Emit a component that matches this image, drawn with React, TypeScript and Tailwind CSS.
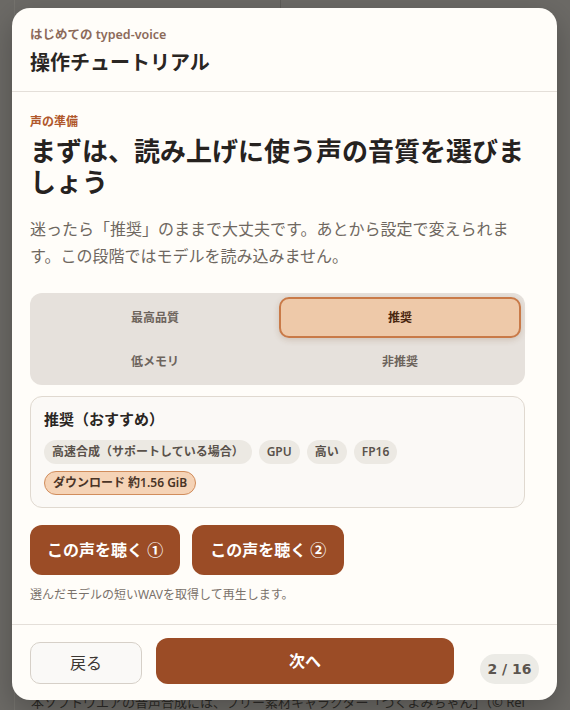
import React from 'react';

const tiers = [
  { label: '最高品質', active: false },
  { label: '推奨', active: true },
  { label: '低メモリ', active: false },
  { label: '非推奨', active: false },
];

const chips = ['高速合成（サポートしている場合）', 'GPU', '高い', 'FP16'];

export default function App() {
  return (
    <div className="relative h-[710px] w-full overflow-hidden bg-[#6c6a66] font-[family-name:'Noto_Sans','Noto_Sans_CJK_JP',sans-serif]">
      {/* 背面のページ */}
      <div className="flex h-full">
        <div className="ml-[14px] mr-[16px] flex flex-1 flex-col border-l border-[#75736e]">
          <div className="h-[692px] shrink-0">
            <div className="ml-[265px] h-[10px] border-l border-[#5e5c58]" />
          </div>
          <p className="pl-[16px] pr-[20px] text-[13px] leading-[20px] text-[#2c2a27]">
            本ソフトウエアの音声合成には、フリー素材キャラクター「つくよみちゃん」（© Rei Tsukuyomi）を使用しています。
          </p>
        </div>
      </div>

      {/* チュートリアルのモーダル */}
      <div className="absolute inset-0 pl-[12px] pt-[8px]">
        <div className="flex h-[692px] w-[545px] flex-col overflow-hidden rounded-[18px] bg-[#fffdf9] shadow-[0_10px_30px_rgba(0,0,0,0.25)]">
          {/* ヘッダー */}
          <div className="border-b border-[#e4dfd9] px-[18px] pb-[14px] pt-[19px]">
            <p className="text-[12.5px] font-semibold leading-[16px] text-[#8c6a5a]">はじめての typed-voice</p>
            <h1 className="mt-[6px] text-[20px] font-bold leading-[28px] text-[#2a2623]">操作チュートリアル</h1>
          </div>

          {/* 本文 */}
          <div className="flex-1 overflow-hidden pl-[18px] pr-[32px] pt-[22px]">
            <p className="text-[12px] font-bold leading-[16px] text-[#b0572b]">声の準備</p>
            <h2 className="mt-[6px] text-[26px] font-bold leading-[31px] text-[#26221f]">
              まずは、読み上げに使う声の音質を選びましょう
            </h2>
            <p className="mt-[18px] text-[16px] leading-[27px] text-[#6e6760]">
              迷ったら「推奨」のままで大丈夫です。あとから設定で変えられます。この段階ではモデルを読み込みません。
            </p>

            <div className="mt-[23px] grid grid-cols-2 gap-[3px] rounded-[12px] bg-[#e6e1dc] px-[4px] pb-[3px] pt-[4px]">
              {tiers.map(tier => (
                <div
                  key={tier.label}
                  className={
                    tier.active
                      ? 'flex h-[41px] items-center justify-center rounded-[10px] border-2 border-[#c97a48] bg-[#eec9a9] text-[12px] font-bold text-[#4a2610] shadow-[0_2px_6px_rgba(120,70,30,0.2)]'
                      : 'flex h-[41px] items-center justify-center rounded-[10px] text-[12px] font-bold text-[#6d645c]'
                  }
                >
                  {tier.label}
                </div>
              ))}
            </div>

            <div className="mt-[11px] rounded-[12px] border border-[#e0d9d0] bg-[#fbf9f6] px-[13px] pb-[12px] pt-[11px]">
              <p className="text-[15px] font-bold leading-[22px] text-[#2a2623]">推奨（おすすめ）</p>
              <div className="mt-[10px] flex flex-wrap gap-x-[7px] gap-y-[7px]">
                {chips.map(c => (
                  <span
                    key={c}
                    className="flex h-[24px] items-center rounded-full bg-[#ece9e3] px-[8px] text-[12px] font-semibold text-[#5a524b]"
                  >
                    {c}
                  </span>
                ))}
                <span className="flex h-[24px] items-center rounded-full border border-[#d18d5c] bg-[#f5d3b6] px-[8px] text-[12px] font-semibold text-[#4a3426]">
                  ダウンロード 約1.56 GiB
                </span>
              </div>
            </div>

            <div className="mt-[17px] flex gap-[12px]">
              <button className="h-[50px] rounded-[12px] bg-[#9b4c26] px-[17px] text-[16px] font-bold text-white">
                この声を聴く ①
              </button>
              <button className="h-[50px] rounded-[12px] bg-[#9b4c26] px-[18px] text-[16px] font-bold text-white">
                この声を聴く ②
              </button>
            </div>
            <p className="mt-[12px] text-[12px] leading-[16px] text-[#7a716a]">
              選んだモデルの短いWAVを取得して再生します。
            </p>
          </div>

          {/* フッター */}
          <div className="flex items-end border-t border-[#e4dfd9] px-[18px] pb-[16px] pt-[13px]">
            <button className="h-[42px] w-[112px] rounded-[10px] border border-[#d6d0c8] bg-[#faf9f7] text-[16px] text-[#3b3632]">
              戻る
            </button>
            <button className="ml-[14px] h-[46px] w-[298px] rounded-[12px] bg-[#9b4c26] text-[16px] font-bold text-white">
              次へ
            </button>
            <span className="ml-auto flex h-[30px] w-[59px] items-center justify-center rounded-full bg-[#ecebe6] font-[family-name:'DejaVu_Sans',sans-serif] text-[14px] font-bold text-[#5c554f]">
              2 / 16
            </span>
          </div>
        </div>
      </div>
    </div>
  );
}
